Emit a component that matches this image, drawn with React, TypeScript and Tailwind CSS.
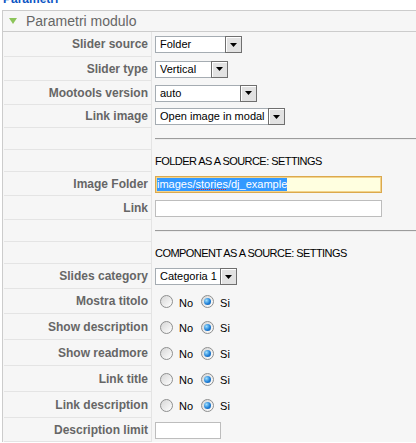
// Joomla-style module parameters pane ("Parametri modulo"), as in the admin
// screenshot: label column on the left, form controls on the right.

const labelClass = "text-[12px] font-bold text-[#666]";
const valueText = "text-[11px] text-black";

function Row({ label, h, children }: { label?: string; h: string; children?: React.ReactNode }) {
  return (
    <div className={`flex ${h}`}>
      <div className="ml-px flex w-[148px] shrink-0 items-center justify-end border-r border-b border-[#e4e4e4] pr-[3px]">
        {label && <span className={labelClass}>{label}</span>}
      </div>
      <div className="flex flex-1 items-center pl-[3px]">{children}</div>
    </div>
  );
}

function Select({ value, w }: { value: string; w: string }) {
  return (
    <div className={`flex h-[17px] ${w}`}>
      <div className={`flex flex-1 items-center border-y border-l border-[#a5acb2] bg-white pl-[4px] ${valueText}`}>
        {value}
      </div>
      <div className="flex h-[17px] w-[17px] items-center justify-center border border-[#6f6f6f] bg-[#e2e2e2] shadow-[inset_1px_1px_0_#fff]">
        <svg width="7" height="4" viewBox="0 0 7 4">
          <polygon points="0,0 7,0 3.5,4" fill="#000" />
        </svg>
      </div>
    </div>
  );
}

function Radio({ checked }: { checked?: boolean }) {
  return (
    <span className="flex h-[13px] w-[13px] items-center justify-center rounded-full border border-[#8e8f8f] bg-gradient-to-br from-[#d6d6d6] to-white">
      {checked && (
        <span className="h-[7px] w-[7px] rounded-full bg-[radial-gradient(circle_at_35%_35%,#9fe0ff,#1f7fd6_55%,#0a4f9e)]" />
      )}
    </span>
  );
}

function YesNo() {
  return (
    <div className="ml-[5px] flex items-center">
      <Radio />
      <span className={`ml-[6px] mt-[3px] ${valueText}`}>No</span>
      <span className="ml-[8px]">
        <Radio checked />
      </span>
      <span className={`ml-[6px] mt-[3px] ${valueText}`}>Si</span>
    </div>
  );
}

function Rule() {
  return <div className="h-[2px] flex-1 border-t border-[#9c9c9c] bg-[#ececec]" />;
}

export default function App() {
  return (
    <div className="h-[443px] w-[416px] overflow-hidden bg-white font-['Liberation_Sans',Arial,sans-serif]">
      <div className="h-[10px] overflow-hidden">
        <div className="-mt-[7px] pl-[3px] text-[12px] leading-[12px] font-bold text-[#0b55c4]">Parametri</div>
      </div>

      <div className="ml-[2px] w-[440px] border-t border-l border-[#cccccc] bg-[#f6f6f6]">
        <div className="flex h-[21px] items-center border-b border-[#cccccc]">
          <svg className="ml-[6px]" width="8" height="6" viewBox="0 0 8 6">
            <polygon points="0,0 8,0 4,6" fill="#8cc45a" />
          </svg>
          <span className="ml-[9px] text-[14px] text-[#666]">Parametri modulo</span>
        </div>

        <Row label="Slider source" h="h-[25px]">
          <Select value="Folder" w="w-[87px]" />
        </Row>
        <Row label="Slider type" h="h-[24px]">
          <Select value="Vertical" w="w-[73px]" />
        </Row>
        <Row label="Mootools version" h="h-[24px]">
          <Select value="auto" w="w-[102px]" />
        </Row>
        <Row label="Link image" h="h-[23px]">
          <Select value="Open image in modal" w="w-[130px]" />
        </Row>
        <Row h="h-[22px]">
          <Rule />
        </Row>
        <Row h="h-[22px]">
          <span className="text-[11px] tracking-[-0.55px] text-black">FOLDER AS A SOURCE: SETTINGS</span>
        </Row>
        <Row label="Image Folder" h="h-[24px]">
          <div className="flex h-[17px] w-[227px] items-center border border-[#dba94e] bg-[#ffffe0] pl-[1px] shadow-[inset_0_0_0_1px_#f3d48c]">
            <span className="bg-[#3399ff] text-[11px] leading-[13px] text-white">
              images/<span className="underline decoration-[#e02020] decoration-dotted decoration-1 underline-offset-1">stories</span>/dj_example
            </span>
          </div>
        </Row>
        <Row label="Link" h="h-[24px]">
          <div className="h-[17px] w-[227px] border border-[#bdbdbd] bg-white" />
        </Row>
        <Row h="h-[22px]">
          <Rule />
        </Row>
        <Row h="h-[22px]">
          <span className="text-[11px] tracking-[-0.55px] text-black">COMPONENT AS A SOURCE: SETTINGS</span>
        </Row>
        <Row label="Slides category" h="h-[25px]">
          <Select value="Categoria 1" w="w-[82px]" />
        </Row>
        <Row label="Mostra titolo" h="h-[25px]">
          <YesNo />
        </Row>
        <Row label="Show description" h="h-[26px]">
          <YesNo />
        </Row>
        <Row label="Show readmore" h="h-[26px]">
          <YesNo />
        </Row>
        <Row label="Link title" h="h-[26px]">
          <YesNo />
        </Row>
        <Row label="Link description" h="h-[26px]">
          <YesNo />
        </Row>
        <Row label="Description limit" h="h-[24px]">
          <div className="h-[17px] w-[66px] border border-[#bdbdbd] bg-white" />
        </Row>
      </div>
    </div>
  );
}
